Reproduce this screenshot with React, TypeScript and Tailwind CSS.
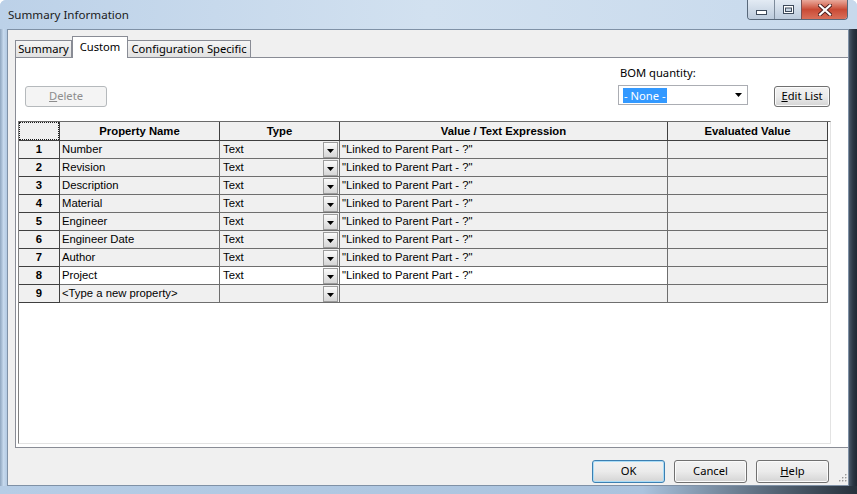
const rows = [
  { n: 1, name: "Number", type: "Text", value: '"Linked to Parent Part - ?"' },
  { n: 2, name: "Revision", type: "Text", value: '"Linked to Parent Part - ?"' },
  { n: 3, name: "Description", type: "Text", value: '"Linked to Parent Part - ?"' },
  { n: 4, name: "Material", type: "Text", value: '"Linked to Parent Part - ?"' },
  { n: 5, name: "Engineer", type: "Text", value: '"Linked to Parent Part - ?"' },
  { n: 6, name: "Engineer Date", type: "Text", value: '"Linked to Parent Part - ?"' },
  { n: 7, name: "Author", type: "Text", value: '"Linked to Parent Part - ?"' },
  { n: 8, name: "Project", type: "Text", value: '"Linked to Parent Part - ?"', active: true },
  { n: 9, name: "<Type a new property>", type: "", value: "" },
];

function DropBtn() {
  return (
    <div className="flex h-[16px] w-[15px] items-center justify-center border border-[#9c9c9c] bg-gradient-to-b from-[#fbfbfb] to-[#d6d6d6]">
      <svg width="7" height="4" viewBox="0 0 7 4" className="mt-[3px]">
        <path d="M0 0h7L3.5 4z" fill="#000" />
      </svg>
    </div>
  );
}

function Button({
  children,
  w,
  def,
  disabled,
}: {
  children: React.ReactNode;
  w: string;
  def?: boolean;
  disabled?: boolean;
}) {
  if (disabled) {
    return (
      <div
        className={`flex h-[21px] ${w} items-center justify-center rounded-[3px] border border-[#b5b9bc] bg-[#f4f4f4] text-[#8d8d8d]`}
      >
        {children}
      </div>
    );
  }
  return (
    <div
      className={`flex h-[23px] ${w} items-center justify-center rounded-[3px] border ${
        def
          ? "border-[#3c7fb1] shadow-[inset_0_0_0_1px_#a9dcf7]"
          : "border-[#707070] shadow-[inset_0_0_0_1px_#fbfbfb]"
      } bg-gradient-to-b from-[#f2f2f2] via-[#ebebeb] via-50% to-[#d4d4d4] text-black`}
    >
      {children}
    </div>
  );
}

export default function App() {
  const cell = "border-r border-b border-[#6e6e6e]";
  return (
    <div className="relative flex h-[494px] w-[857px] flex-col overflow-hidden whitespace-nowrap rounded-t-[6px] bg-[#bcd2ea] font-['Noto_Sans',sans-serif] text-[11.2px] text-black">
      {/* title bar */}
      <div className="flex h-[29px] items-start bg-gradient-to-r from-[#bcd1e8] via-[#d2e1f0] to-[#c7d9ec]">
        <span className="pl-[8px] pt-[7px] text-[11.6px] leading-[16px] text-[#1b1b1b]">Summary Information</span>
        <div className="ml-auto mr-[9px] flex h-[20px] overflow-hidden rounded-b-[4px] border border-t-0 border-[#58687a]">
          <div className="flex w-[27px] items-center justify-center border-r border-[#7d8b9b] bg-gradient-to-b from-[#e3ebf4] to-[#bccbdc]">
            <svg width="11" height="5" viewBox="0 0 11 5" className="mt-[6px]">
              <rect x="0.5" y="0.5" width="10" height="4" fill="#fff" stroke="#3d4a5a" />
            </svg>
          </div>
          <div className="flex w-[27px] items-center justify-center border-r border-[#7d5252] bg-gradient-to-b from-[#e3ebf4] to-[#bccbdc]">
            <svg width="11" height="9" viewBox="0 0 11 9">
              <rect x="0.5" y="0.5" width="10" height="8" fill="#fff" stroke="#3d4a5a" />
              <rect x="2.5" y="3" width="6" height="3.5" fill="#c9d6e4" stroke="#3d4a5a" />
            </svg>
          </div>
          <div className="flex w-[45px] items-center justify-center bg-gradient-to-b from-[#e9a99c] via-[#c94a35] via-50% to-[#d9705a]">
            <svg width="14" height="12" viewBox="0 0 14 12">
              <path d="M2 1.5L12 10.5M12 1.5L2 10.5" stroke="#4a2020" strokeWidth="4" strokeLinecap="square" />
              <path d="M2 1.5L12 10.5M12 1.5L2 10.5" stroke="#fff" strokeWidth="2.2" strokeLinecap="square" />
            </svg>
          </div>
        </div>
      </div>

      <div className="flex flex-1">
        <div className="w-[7px] bg-gradient-to-r from-[#8fa6bf] via-[#c6d9ed] to-[#b3cae3]" />
        {/* client */}
        <div className="relative flex w-[842px] flex-col overflow-hidden border border-[#7f91a6] bg-[#f0f0f0]">
          {/* tabs */}
          <div className="relative z-10 flex h-[27px] items-end pl-[7px]">
            <div className="flex h-[17px] w-[57px] items-center justify-center border border-b-0 border-[#898c95] bg-gradient-to-b from-[#f5f5f5] to-[#e1e1e1] leading-[14px]">
              Summary
            </div>
            <div className="-mb-[1px] flex h-[22px] w-[56px] items-center justify-center border border-b-0 border-[#898c95] bg-white pb-[2px] leading-[14px]">
              Custom
            </div>
            <div className="flex h-[17px] w-[123px] items-center justify-center border border-b-0 border-l-0 border-[#898c95] bg-gradient-to-b from-[#f5f5f5] to-[#e1e1e1] leading-[14px]">
              Configuration Specific
            </div>
          </div>

          {/* panel */}
          <div className="ml-[7px] flex h-[391px] w-[836px] shrink-0 flex-col border border-[#898c95] bg-white">
            <div className="ml-[2px] flex w-[813px] flex-col">
              {/* top controls */}
              <div className="flex h-[63px] items-end pb-[14px]">
                <div className="ml-[7px]">
                  <Button w="w-[82px]" disabled>
                    <span>
                      <span className="underline">D</span>elete
                    </span>
                  </Button>
                </div>
                <div className="flex-1" />
                <div className="mb-[2px] flex flex-col">
                  <span className="pl-[2px] leading-[16px]">BOM quantity:</span>
                  <div className="mt-[4px] flex h-[20px] w-[130px] items-center border border-[#abadb3] bg-white pl-[4px] pr-[5px]">
                    <span className="bg-[#3399ff] px-[1px] leading-[15px] text-white">- None -</span>
                    <svg width="7" height="4" viewBox="0 0 7 4" className="ml-auto">
                      <path d="M0 0h7L3.5 4z" fill="#000" />
                    </svg>
                  </div>
                </div>
                <div className="ml-[26px] mr-[1px]">
                  <div className="flex h-[21px] w-[56px] items-center justify-center rounded-[3px] border border-[#707070] bg-gradient-to-b from-[#f2f2f2] via-[#ebebeb] via-50% to-[#d4d4d4] shadow-[inset_0_0_0_1px_#fbfbfb]">
                    <span>
                      <span className="underline">E</span>dit List
                    </span>
                  </div>
                </div>
              </div>

              {/* grid */}
              <div className="h-[323px] border border-b-[#e3e3e3] border-l-[#808080] border-r-[#e3e3e3] border-t-[#6a6a6a] bg-white font-['Liberation_Sans',Arial,sans-serif] text-[11.3px]">
                <div className="grid grid-cols-[41px_160px_120px_328px_160px]">
                  <div className="relative h-[19px] border-b border-r border-[#3f3f3f] bg-[#f0f0f0]">
                    <div className="absolute inset-0 border border-dotted border-[#1a1a1a]" />
                  </div>
                  {["Property Name", "Type", "Value / Text Expression", "Evaluated Value"].map((h) => (
                    <div
                      key={h}
                      className="flex h-[19px] items-center justify-center border-b border-r border-[#3f3f3f] bg-[#f0f0f0] font-bold"
                    >
                      {h}
                    </div>
                  ))}
                  {rows.map((r) => {
                    const bg = r.active ? "bg-white" : "bg-[#f0f0f0]";
                    return [
                      <div
                        key={`n${r.n}`}
                        className="flex h-[18px] items-center justify-center border-b border-r border-[#3f3f3f] bg-[#f0f0f0] font-bold"
                      >
                        {r.n}
                      </div>,
                      <div key={`p${r.n}`} className={`flex h-[18px] items-center pl-[2px] ${cell} ${bg}`}>
                        {r.name}
                      </div>,
                      <div key={`t${r.n}`} className={`flex h-[18px] items-center justify-between pl-[3px] pr-[1px] ${cell} ${bg}`}>
                        <span>{r.type}</span>
                        <DropBtn />
                      </div>,
                      <div key={`v${r.n}`} className={`flex h-[18px] items-center pl-[2px] ${cell} ${bg}`}>
                        {r.value}
                      </div>,
                      <div key={`e${r.n}`} className={`h-[18px] ${cell} bg-[#f0f0f0]`} />,
                    ];
                  })}
                </div>
              </div>
            </div>
          </div>

          {/* bottom buttons */}
          <div className="flex h-[37px] items-start justify-end gap-[9px] pr-[19px] pt-[12px]">
            <Button w="w-[73px]" def>
              OK
            </Button>
            <Button w="w-[73px]">Cancel</Button>
            <Button w="w-[73px]">
              <span>
                <span className="underline">H</span>elp
              </span>
            </Button>
          </div>

          {/* resize grip */}
          <svg width="11" height="11" viewBox="0 0 11 11" className="absolute bottom-[1px] right-[1px]">
            {[
              [9, 1],
              [9, 4],
              [6, 4],
              [9, 7],
              [6, 7],
              [3, 7],
            ].map(([x, y], i) => (
              <g key={i}>
                <rect x={x + 0.5} y={y + 0.5} width="1.5" height="1.5" fill="#fff" />
                <rect x={x} y={y} width="1.5" height="1.5" fill="#9a9a9a" />
              </g>
            ))}
          </svg>
        </div>
        <div className="flex-1 bg-gradient-to-r from-[#4a5868] via-[#2c3744] to-[#1f2833]" />
      </div>
      <div className="h-[8px] bg-gradient-to-r from-[#b6cde6] via-[#aac3de] via-75% to-[#27313c]" />
    </div>
  );
}
